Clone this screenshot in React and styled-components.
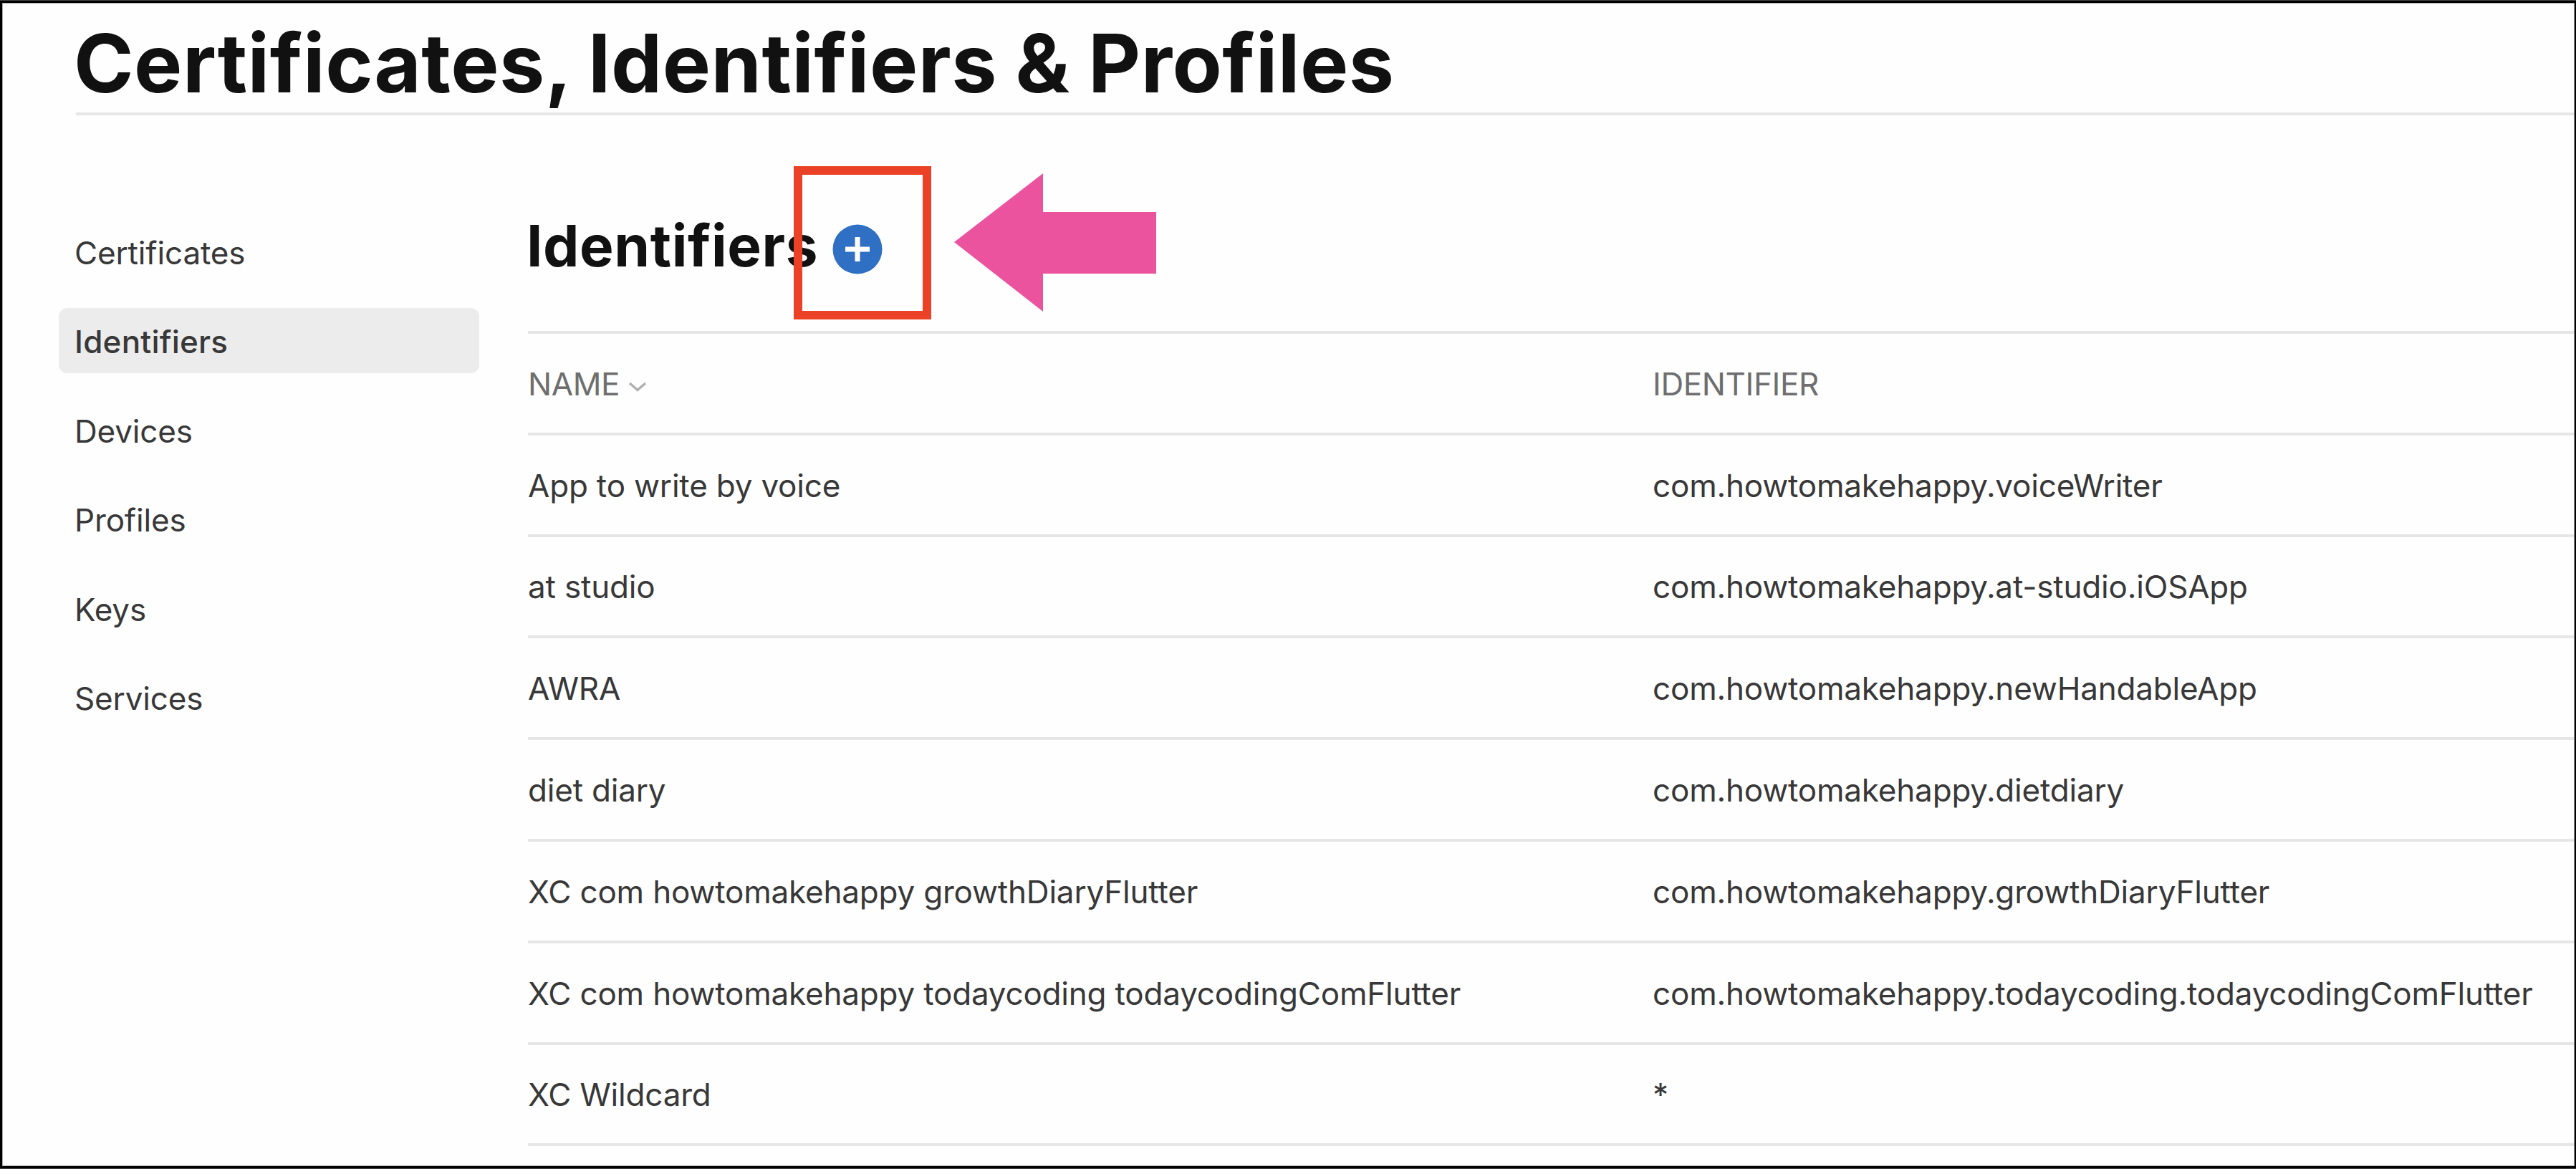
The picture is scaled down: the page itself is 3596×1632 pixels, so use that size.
import React from "react";
import styled, { createGlobalStyle } from "styled-components";

const GlobalStyle = createGlobalStyle`
  * {
    box-sizing: border-box;
  }

  body {
    margin: 0;
    border: solid #444;
    border-width: 1px 0;
    background: #fefefe;
    color: #383838;
    font-family: Inter, "Liberation Sans", sans-serif;
  }
`;

const Page = styled.div`
  height: 1630px;
  padding: 0 0 0 103px;
  border: solid #000;
  border-width: 3px 2px 3px 3px;
  box-shadow: inset 0 0 0 1px #aaa;
  overflow: hidden;
`;

const PageHeader = styled.header`
  height: 157px;
  margin-right: 1px;
  border-bottom: 4px solid #e6e6e6;
`;

const PageTitle = styled.h1`
  margin: 0 0 0 -3px;
  padding-top: 16px;
  font-size: 113px;
  font-weight: 700;
  line-height: 136px;
  letter-spacing: 0.5px;
  word-spacing: -2px;
  color: #111;
  white-space: nowrap;
`;

const Content = styled.div`
  display: flex;
`;

const Sidebar = styled.nav`
  display: flex;
  flex-direction: column;
  flex: none;
  gap: 33.4px;
  width: 587px;
  margin: 145px 68px 0 -24px;
`;

const SidebarLink = styled.a`
  display: block;
  height: 91px;
  padding-left: 22px;
  border-radius: 12px;
  background: ${({ $active }) => ($active ? "#ececec" : "transparent")};
  font-size: 44px;
  font-weight: ${({ $active }) => ($active ? 500 : 400)};
  line-height: 94px;
  letter-spacing: ${({ $active }) => ($active ? "0.2px" : "-0.15px")};
`;

const Main = styled.main`
  flex: 1;
  margin-right: 1px;
`;

const MainHeader = styled.div`
  position: relative;
  display: flex;
  height: 301px;
  padding-top: 134px;
`;

const MainTitle = styled.h2`
  margin: 0 0 0 -2px;
  width: 427px;
  font-size: 80px;
  font-weight: 700;
  line-height: 96px;
  letter-spacing: 0.6px;
  color: #111;
`;

const AddIcon = styled.svg`
  display: block;
  width: 70px;
  height: 70px;
  margin-top: 18px;
`;

const Highlight = styled.div`
  position: absolute;
  top: 71px;
  left: 371px;
  width: 192px;
  height: 214px;
  border: 12px solid #ea4127;
`;

const Arrow = styled.svg`
  position: absolute;
  top: 81px;
  left: 595px;
  width: 282px;
  height: 193px;
`;

const Row = styled.div`
  display: grid;
  grid-template-columns: 1570px 1fr;
  height: 141.8px;
  padding-top: 2px;
  border-top: 4px solid #e6e6e6;
  color: ${({ $head }) => ($head ? "#6e6e6e" : "inherit")};
  font-size: 44px;
  letter-spacing: ${({ $head }) => ($head ? "-0.4px" : "-0.19px")};
  white-space: nowrap;
`;

const Cell = styled.div`
  display: flex;
  align-items: center;
`;

const SortIcon = styled.svg`
  width: 26px;
  height: 16px;
  margin: 8px 0 0 12px;
`;

const links = ["Certificates", "Identifiers", "Devices", "Profiles", "Keys", "Services"];

const identifiers = [
  ["App to write by voice", "com.howtomakehappy.voiceWriter"],
  ["at studio", "com.howtomakehappy.at-studio.iOSApp"],
  ["AWRA", "com.howtomakehappy.newHandableApp"],
  ["diet diary", "com.howtomakehappy.dietdiary"],
  ["XC com howtomakehappy growthDiaryFlutter", "com.howtomakehappy.growthDiaryFlutter"],
  ["XC com howtomakehappy todaycoding todaycodingComFlutter", "com.howtomakehappy.todaycoding.todaycodingComFlutter"],
  ["XC Wildcard", "*"],
];

const IdentifierTable = () => (
  <div>
    <Row $head>
      <Cell>
        NAME
        <SortIcon viewBox="0 0 26 16">
          <path d="M2 3l11 9.5L24 3" fill="none" stroke="#b0b0b0" strokeWidth="3.5" />
        </SortIcon>
      </Cell>
      <Cell>IDENTIFIER</Cell>
    </Row>
    {identifiers.map(([name, identifier]) => (
      <Row key={name}>
        <Cell>{name}</Cell>
        <Cell>{identifier}</Cell>
      </Row>
    ))}
    <Row />
  </div>
);

const App = () => (
  <>
    <GlobalStyle />
    <Page>
      <PageHeader>
        <PageTitle>Certificates, Identifiers &amp; Profiles</PageTitle>
      </PageHeader>
      <Content>
        <Sidebar>
          {links.map(link => (
            <SidebarLink key={link} $active={link === "Identifiers"}>
              {link}
            </SidebarLink>
          ))}
        </Sidebar>
        <Main>
          <MainHeader>
            <MainTitle>Identifiers</MainTitle>
            <AddIcon viewBox="0 0 70 70">
              <circle cx="35" cy="35" r="34.5" fill="#2f6fc4" />
              <path d="M35 18v34M18 35h34" stroke="#fff" strokeWidth="7" />
            </AddIcon>
            <Highlight />
            <Arrow viewBox="0 0 282 193">
              <path d="M0 96L124 0v54h158v86H124v53z" fill="#eb539e" />
            </Arrow>
          </MainHeader>
          <IdentifierTable />
        </Main>
      </Content>
    </Page>
  </>
);

export default App;
